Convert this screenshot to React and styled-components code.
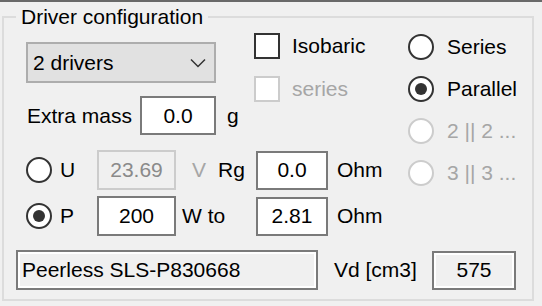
import React from 'react';
import styled, { createGlobalStyle } from 'styled-components';

const Global = createGlobalStyle`
  html, body { margin: 0; padding: 0; background: #f0f0f0; }
  body { font-family: "Liberation Sans", Arial, sans-serif; font-size: 21px; color: #000; }
  *, *::before, *::after { box-sizing: border-box; }
`;

const Page = styled.div`
  width: 542px;
  height: 306px;
  background: #f0f0f0;
  border-top: 2px solid #696969;
  padding: 3px 8px 0 2px;
  overflow: hidden;
`;

const Group = styled.fieldset`
  margin: 0;
  padding: 0 0 0 12px;
  border: 2px solid #dcdcdc;
  height: 296px;
  min-width: 0;
`;

const Legend = styled.legend`
  padding: 0 5px;
  line-height: 24px;
  font-size: 21px;
  white-space: nowrap;
`;

const Main = styled.div`
  display: flex;
  align-items: flex-start;
  margin-left: 10px;
  padding-top: 4px;
`;

const LeftBlock = styled.div`
  width: 382px;
  display: flex;
  flex-direction: column;
`;

const TopRow = styled.div`
  display: flex;
  align-items: flex-start;
`;

const ComboCol = styled.div`
  width: 228px;
  padding-top: 9px;
  display: flex;
  flex-direction: column;
`;

const Combo = styled.div`
  width: 190px;
  height: 41px;
  border: 2px solid #adadad;
  background: #e1e1e1;
  display: flex;
  align-items: center;
  justify-content: space-between;
  padding: 0 8px 0 5px;
  white-space: nowrap;
`;

const Row = styled.div`
  display: flex;
  align-items: center;
  height: ${(p) => p.$h || 40}px;
  margin-top: ${(p) => p.$mt || 0}px;
  margin-left: ${(p) => p.$ml || 0}px;
`;

const Label = styled.span`
  display: inline-block;
  white-space: nowrap;
  flex: none;
  margin-left: ${(p) => p.$ml || 0}px;
  width: ${(p) => (p.$w ? `${p.$w}px` : 'auto')};
  color: ${(p) => (p.$disabled ? '#a6a6a6' : '#000')};
`;

const TextBox = styled.div`
  flex: none;
  width: ${(p) => p.$w}px;
  height: ${(p) => p.$h || 39}px;
  margin-left: ${(p) => p.$ml || 0}px;
  border: 2px solid ${(p) => (p.$disabled ? '#cccccc' : '#7a7a7a')};
  background: ${(p) => (p.$disabled || p.$readonly ? '#f0f0f0' : '#ffffff')};
  box-shadow: ${(p) => (p.$readonly ? 'inset 0 0 0 2px #ffffff' : 'none')};
  color: ${(p) => (p.$disabled ? '#8a8a8a' : '#000')};
  display: flex;
  align-items: center;
  justify-content: ${(p) => (p.$left ? 'flex-start' : 'center')};
  padding-left: ${(p) => (p.$left ? 4 : 0)}px;
  white-space: nowrap;
`;

const CheckCol = styled.div`
  display: flex;
  flex-direction: column;
  gap: 17px;
`;

const OptionRow = styled.div`
  display: flex;
  align-items: center;
  height: 26px;
  gap: ${(p) => p.$gap || 12}px;
`;

const CheckBox = styled.span`
  flex: none;
  width: 26px;
  height: 26px;
  border: 2px solid ${(p) => (p.$disabled ? '#cccccc' : '#333333')};
  background: #ffffff;
`;

const Radio = styled.span`
  flex: none;
  position: relative;
  width: 26px;
  height: 26px;
  border-radius: 50%;
  border: 2px solid ${(p) => (p.$disabled ? '#cccccc' : '#333333')};
  background: #ffffff;
  &::after {
    content: '';
    display: ${(p) => (p.$checked ? 'block' : 'none')};
    position: absolute;
    left: 5px;
    top: 5px;
    width: 12px;
    height: 12px;
    border-radius: 50%;
    background: #333333;
  }
`;

const RadioCol = styled.div`
  display: flex;
  flex-direction: column;
  gap: 16px;
  padding-top: 1px;
`;

const Chevron = () => (
  <svg width="16" height="10" viewBox="0 0 16 10" aria-hidden="true">
    <path d="M1 1.5 L8 8.5 L15 1.5" fill="none" stroke="#333" strokeWidth="1.5" />
  </svg>
);

export default function App() {
  return (
    <>
      <Global />
      <Page>
        <Group>
          <Legend>Driver configuration</Legend>
          <Main>
            <LeftBlock>
              <TopRow>
                <ComboCol>
                  <Combo>
                    <span>2 drivers</span>
                    <Chevron />
                  </Combo>
                  <Row $h={39} $mt={13}>
                    <Label $ml={1} $w={113}>Extra mass</Label>
                    <TextBox $w={76}>0.0</TextBox>
                    <Label $ml={11}>g</Label>
                  </Row>
                </ComboCol>
                <CheckCol>
                  <OptionRow>
                    <CheckBox />
                    <Label>Isobaric</Label>
                  </OptionRow>
                  <OptionRow>
                    <CheckBox $disabled />
                    <Label $disabled>series</Label>
                  </OptionRow>
                </CheckCol>
              </TopRow>
              <Row $mt={15}>
                <Radio />
                <Label $ml={8} $w={37}>U</Label>
                <TextBox $w={79} $h={40} $disabled>23.69</TextBox>
                <Label $ml={16} $w={26} $disabled>V</Label>
                <Label $w={38}>Rg</Label>
                <TextBox $w={72}>0.0</TextBox>
                <Label $ml={9}>Ohm</Label>
              </Row>
              <Row $mt={6}>
                <Radio $checked />
                <Label $ml={8} $w={37}>P</Label>
                <TextBox $w={79} $h={40}>200</TextBox>
                <Label $ml={6} $w={74}>W to</Label>
                <TextBox $w={72}>2.81</TextBox>
                <Label $ml={9}>Ohm</Label>
              </Row>
            </LeftBlock>
            <RadioCol>
              <OptionRow $gap={13}>
                <Radio />
                <Label>Series</Label>
              </OptionRow>
              <OptionRow $gap={13}>
                <Radio $checked />
                <Label>Parallel</Label>
              </OptionRow>
              <OptionRow $gap={13}>
                <Radio $disabled />
                <Label $disabled>2 || 2 ...</Label>
              </OptionRow>
              <OptionRow $gap={13}>
                <Radio $disabled />
                <Label $disabled>3 || 3 ...</Label>
              </OptionRow>
            </RadioCol>
          </Main>
          <Row $mt={14}>
            <TextBox $w={302} $h={40} $readonly $left>Peerless SLS-P830668</TextBox>
            <Label $ml={16} $w={98}>Vd [cm3]</Label>
            <TextBox $w={84} $readonly>575</TextBox>
          </Row>
        </Group>
      </Page>
    </>
  );
}
